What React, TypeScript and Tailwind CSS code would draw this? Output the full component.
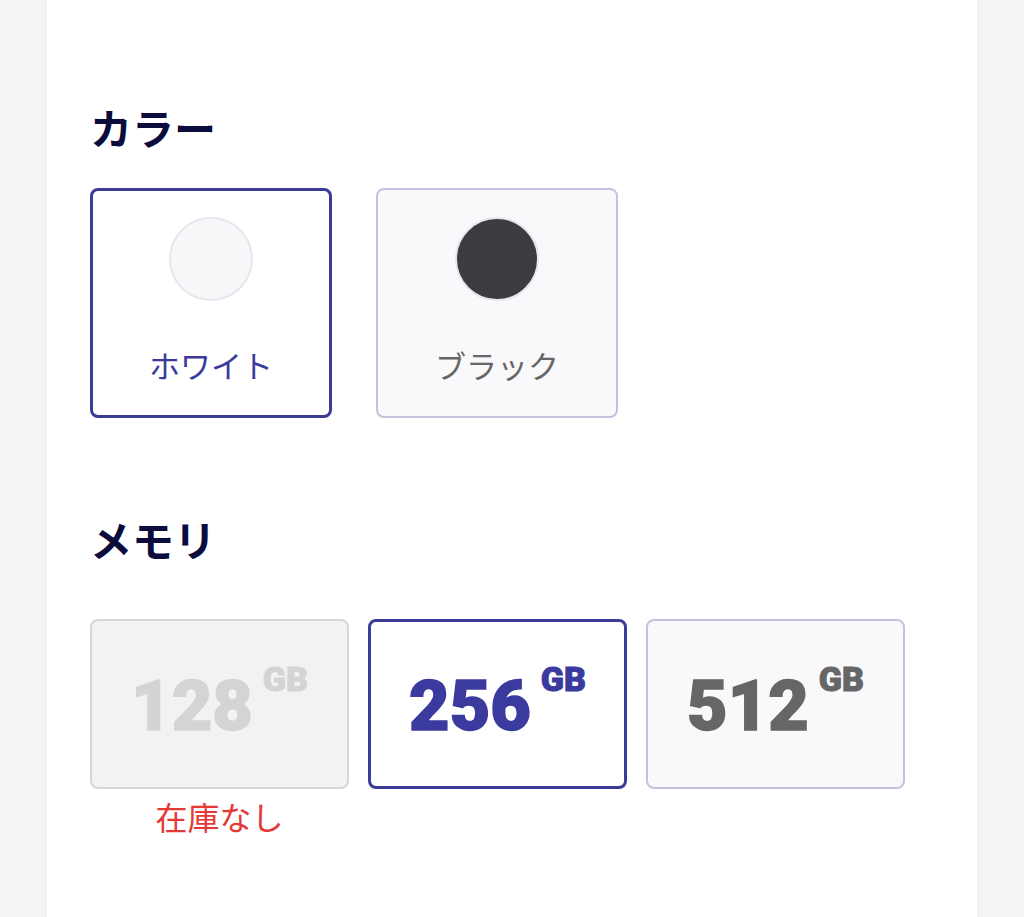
import type { ReactNode } from "react";

type ColorOption = { label: string; swatch: string; selected?: boolean };
type MemoryOption = { size: string; selected?: boolean; soldOut?: boolean };

const colors: ColorOption[] = [
  { label: "ホワイト", swatch: "bg-[#f7f7f9]", selected: true },
  { label: "ブラック", swatch: "bg-[#3a3c40]" },
];

const memories: MemoryOption[] = [
  { size: "128", soldOut: true },
  { size: "256", selected: true },
  { size: "512" },
];

const jp = { fontFamily: '"Noto Sans CJK JP", "Noto Sans", sans-serif' };
const num = { fontFamily: 'Roboto, "Liberation Sans", sans-serif' };

function Heading({ children }: { children: ReactNode }) {
  return (
    <h2 style={jp} className="text-[42px] font-bold leading-[48px] text-[#0c0c3c]">
      {children}
    </h2>
  );
}

export default function App() {
  return (
    <div className="min-h-[917px] bg-[#f4f4f4]">
      <div className="mx-auto min-h-[917px] w-[930px] bg-white pl-[43px] pt-[103px] shadow-[0_0_6px_rgba(0,0,0,0.05)]">
        <Heading>カラー</Heading>
        <div className="mt-[37px] flex gap-[44px]">
          {colors.map((c) => (
            <div
              key={c.label}
              className={
                c.selected
                  ? "flex h-[230px] w-[242px] flex-col items-center rounded-[8px] border-[3px] border-[#3b3b98] bg-white"
                  : "flex h-[230px] w-[242px] flex-col items-center rounded-[8px] border-2 border-[#c2c2dc] bg-[#f9f9fb]"
              }
            >
              <div
                className={`${c.selected ? "mt-[26px]" : "mt-[27px]"} h-[84px] w-[84px] rounded-full border-2 border-[#e6e6ee] ${c.swatch}`}
              />
              <span
                style={jp}
                className={`mt-[44px] text-[31px] leading-[40px] ${c.selected ? "text-[#3a3a9c]" : "text-[#666666]"}`}
              >
                {c.label}
              </span>
            </div>
          ))}
        </div>

        <div className="mt-[97px]">
          <Heading>メモリ</Heading>
        </div>
        <div className="mt-[56px] flex gap-[19px]">
          {memories.map((m) => (
            <div key={m.size} className="flex w-[259px] flex-col items-center">
              <div
                className={
                  m.selected
                    ? "flex h-[170px] w-full items-center justify-center rounded-[8px] border-[3px] border-[#3b3b98] bg-white text-[#3a3a9f]"
                    : m.soldOut
                      ? "flex h-[170px] w-full items-center justify-center rounded-[8px] border-2 border-[#d6d6d6] bg-[#f2f2f2] text-[#d4d4d4]"
                      : "flex h-[170px] w-full items-center justify-center rounded-[8px] border-2 border-[#c2c2dc] bg-[#f9f9fb] text-[#666666]"
                }
              >
                <div style={num} className="mt-[4px] flex items-start [-webkit-text-stroke:1.5px_currentColor]">
                  <span className="text-[70px] font-black leading-[70px]">{m.size}</span>
                  <span className="ml-[10px] mt-[-12px] text-[34px] font-black leading-[40px] [-webkit-text-stroke:1px_currentColor]">
                    GB
                  </span>
                </div>
              </div>
              {m.soldOut && (
                <span style={jp} className="mt-[7px] text-[32px] leading-[40px] text-[#e53935]">
                  在庫なし
                </span>
              )}
            </div>
          ))}
        </div>
      </div>
    </div>
  );
}
